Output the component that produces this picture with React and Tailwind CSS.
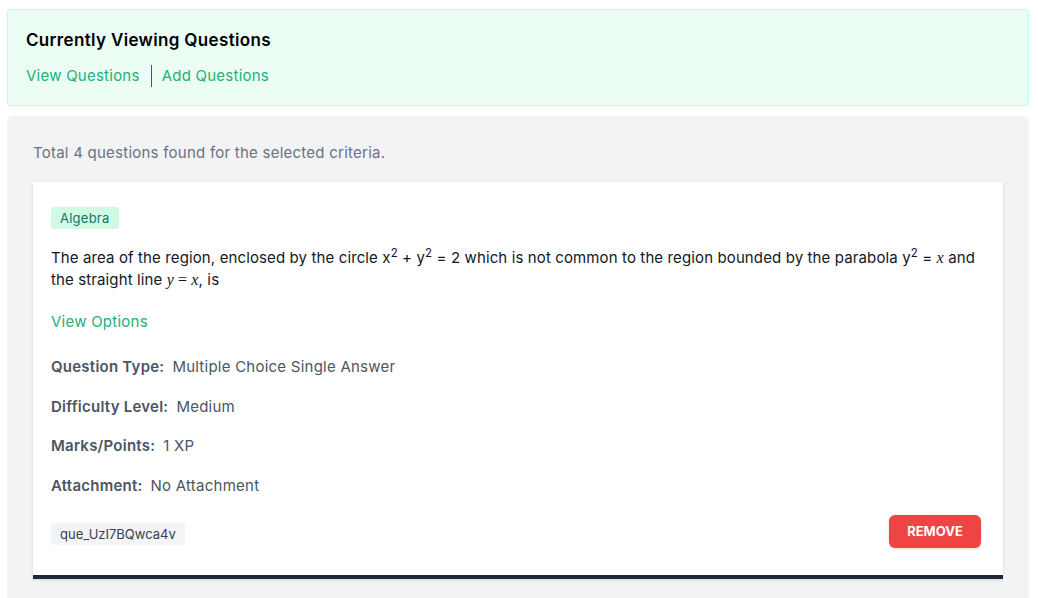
export default function App() {
  const details = [
    ["Question Type:", "Multiple Choice Single Answer"],
    ["Difficulty Level:", "Medium"],
    ["Marks/Points:", "1 XP"],
    ["Attachment:", "No Attachment"],
  ];
  const math = { fontFamily: '"Liberation Serif", "DejaVu Serif", serif' };

  return (
    <div
      className="min-h-screen bg-white pl-[7px] pr-[9px] pt-[9px] tracking-[0.015em]"
      style={{ fontFamily: 'Inter, "Noto Sans", sans-serif' }}
    >
      {/* header */}
      <div className="h-[97px] rounded-[3px] border border-[#c9f7df] bg-[#ecfdf4] px-[18px] pt-[18px]">
        <h1 className="text-[17px] font-semibold leading-[24px] tracking-[0.02em] text-black">
          Currently Viewing Questions
        </h1>
        <div className="mt-[13px] flex items-center text-[15px] leading-[22px] text-[#22b07d]">
          <span>View Questions</span>
          <span className="ml-[11px] mr-[10px] h-[22px] w-px bg-[#6d28d9]" />
          <span>Add Questions</span>
        </div>
      </div>

      {/* results */}
      <div className="mt-[10px] rounded-md bg-[#f2f3f5] px-[26px] pt-[26px] pb-6">
        <p className="text-[15px] leading-[22px] text-[#6b7280]">
          Total 4 questions found for the selected criteria.
        </p>

        <div className="mt-[18px] border-b-4 border-[#1f2937] bg-white pl-[18px] pr-[18px] pt-[25px] pb-[27px] shadow-[0_1px_3px_rgba(0,0,0,0.12)]">
          <div className="w-fit rounded-[3px] bg-[#d1fae5] px-[9px] py-[2px] text-[13px] leading-[18px] text-[#0f766e]">
            Algebra
          </div>

          <p className="mt-[18px] text-[15px] leading-[22px] tracking-[0.008em] text-[#111827]">
            The area of the region, enclosed by the circle x<sup className="text-[11.5px]">2</sup> + y
            <sup className="text-[11.5px]">2</sup> = 2 which is not common to the region bounded by the parabola y
            <sup className="text-[11.5px]">2</sup> = <i style={math} className="text-[16px]">x</i> and the straight line{" "}
            <span style={math} className="text-[16px]">
              <i>y</i> = <i>x</i>
            </span>
            , is
          </p>

          <div className="mt-[20px] text-[15px] leading-[22px] text-[#22b07d]">View Options</div>

          <div className="mt-[23px] flex flex-col gap-[17.7px]">
            {details.map(([k, v]) => (
              <div key={k} className="text-[15px] leading-[22px] text-[#4b5563]">
                <span className="font-semibold">{k}</span>
                <span className="ml-[8px]">{v}</span>
              </div>
            ))}
          </div>

          <div className="mt-[18px] mr-[4px] flex items-end justify-between">
            <span className="mb-[3px] rounded-[3px] bg-[#f3f4f6] px-[9px] py-[2px] text-[13px] leading-[18px] tracking-normal text-[#374151]">
              que_UzI7BQwca4v
            </span>
            <button className="h-[33px] w-[92px] rounded-md bg-[#ef4444] text-[13px] font-bold uppercase tracking-normal text-white shadow-[0_1px_3px_rgba(0,0,0,0.15)]">
              Remove
            </button>
          </div>
        </div>
      </div>
    </div>
  );
}
